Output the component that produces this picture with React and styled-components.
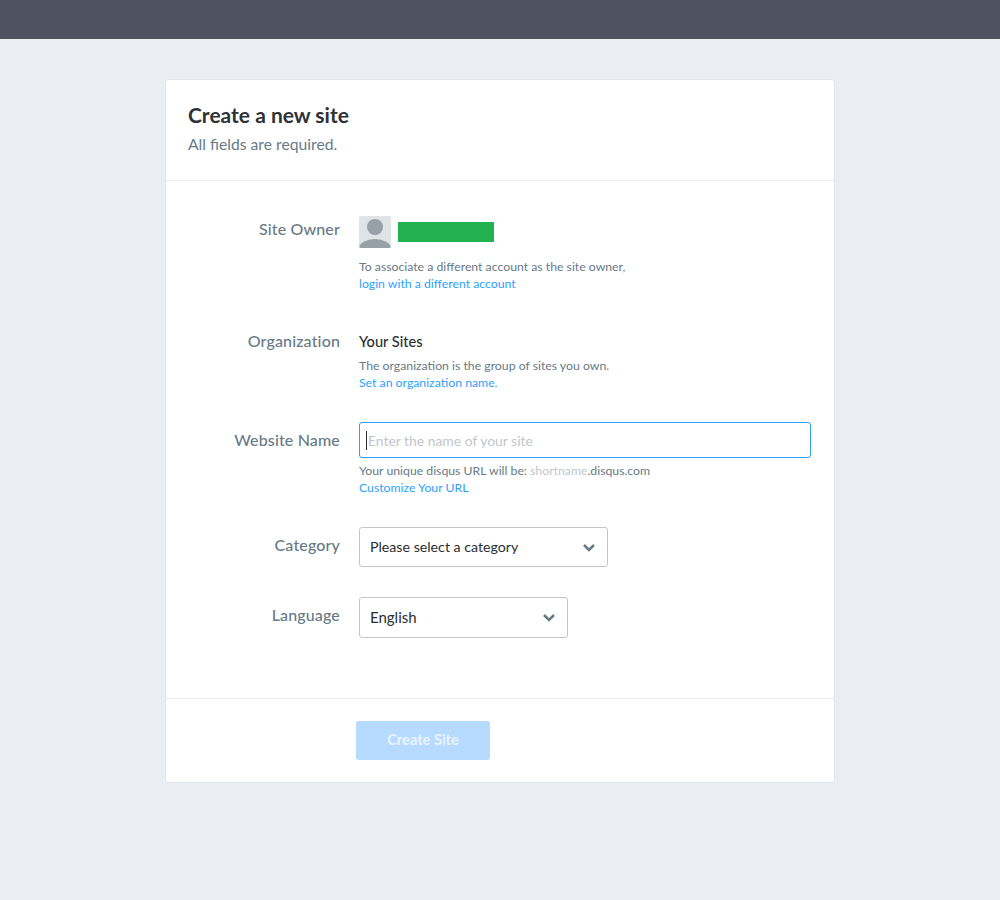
import React from "react";
import styled, { createGlobalStyle } from "styled-components";

const GlobalStyle = createGlobalStyle`
  html, body {
    margin: 0;
    padding: 0;
    background: #eaeef2;
    font-family: "Lato", "Noto Sans", sans-serif;
  }
  * { box-sizing: border-box; }
`;

const TopBar = styled.div`
  height: 39px;
  background: #4d5360;
`;

const Page = styled.div`
  min-height: 861px;
  padding-top: 40px;
`;

const Card = styled.div`
  width: 670px;
  height: 704px;
  margin: 0 auto;
  background: #fff;
  border: 1px solid #e3e6ec;
  border-radius: 3px;
  display: flex;
  flex-direction: column;
`;

const CardHeader = styled.div`
  height: 101px;
  padding: 21px 22px 0;
  border-bottom: 1px solid #e9ebf0;
`;

const Title = styled.h1`
  margin: 0;
  font-size: 21px;
  line-height: 28px;
  font-weight: 700;
  color: #2e3236;
`;

const Subtitle = styled.p`
  margin: 3px 0 0;
  font-size: 15.7px;
  line-height: 24px;
  color: #687a86;
`;

const Form = styled.div`
  flex: 1;
  padding-top: 35px;
`;

const Row = styled.div`
  display: grid;
  grid-template-columns: 174px 1fr;
  column-gap: 19px;
  margin-bottom: ${(props) => props.$gap}px;
`;

const Label = styled.div`
  text-align: right;
  font-size: 16px;
  letter-spacing: 0.15px;
  line-height: 24px;
  font-weight: 500;
  color: #687a86;
  padding-top: ${(props) => props.$top || 0}px;
`;

const OwnerLine = styled.div`
  display: flex;
  align-items: center;
  gap: 7px;
`;

const Avatar = styled.svg`
  display: block;
  width: 32px;
  height: 32px;
  border-radius: 2px;
`;

const Redacted = styled.div`
  width: 96px;
  height: 20px;
  background: #23b24f;
`;

const Hint = styled.div`
  margin-top: ${(props) => props.$top}px;
  font-size: 12.25px;
  line-height: 17px;
  color: #687a86;
`;

const Link = styled.a`
  color: #2e9fff;
  text-decoration: none;
`;

const Muted = styled.span`
  color: #c2c6cc;
`;

const OrgName = styled.div`
  padding-top: 1px;
  font-size: 14.6px;
  line-height: 24px;
  font-weight: 500;
  color: #2a2e2e;
`;

const InputWrap = styled.div`
  position: relative;
  width: 452px;
`;

const TextInput = styled.input`
  display: block;
  width: 100%;
  height: 36px;
  padding: 0 8px;
  border: 1px solid #2e9fff;
  border-radius: 3px;
  outline: none;
  font-family: inherit;
  font-size: 13.9px;
  color: #2a2e2e;
  &::placeholder {
    color: #c2c6cc;
    opacity: 1;
  }
`;

const Caret = styled.span`
  position: absolute;
  left: 7px;
  top: 9px;
  width: 1px;
  height: 19px;
  background: #2a2e2e;
`;

const SelectBox = styled.div`
  width: ${(props) => props.$width}px;
  height: ${(props) => props.$height}px;
  padding: 0 11px 0 10px;
  display: flex;
  align-items: center;
  justify-content: space-between;
  border: 1px solid #c2c6cc;
  border-radius: 3px;
  font-size: ${(props) => props.$size}px;
  color: #2a2e2e;
`;

const SelectText = styled.span`
  margin-top: -1px;
`;

const Chevron = styled.svg`
  display: block;
  width: 14px;
  height: 9px;
`;

const CardFooter = styled.div`
  height: 84px;
  padding: 22px 0 0 190px;
  border-top: 1px solid #e9ebf0;
`;

const SubmitButton = styled.button`
  display: block;
  width: 134px;
  height: 39px;
  padding: 0 0 2px;
  border: none;
  border-radius: 3px;
  background: #b6dbff;
  color: #e9f4ff;
  font-family: inherit;
  font-size: 14.6px;
  font-weight: 700;
`;

const ChevronIcon = () => (
  <Chevron viewBox="0 0 14 9">
    <path d="M2 2l5 5 5-5" fill="none" stroke="#687a86" strokeWidth="2.5" />
  </Chevron>
);

export default function App() {
  return (
    <>
      <GlobalStyle />
      <TopBar />
      <Page>
        <Card>
          <CardHeader>
            <Title>Create a new site</Title>
            <Subtitle>All fields are required.</Subtitle>
          </CardHeader>
          <Form>
            <Row $gap={37}>
              <Label $top={1}>Site Owner</Label>
              <div>
                <OwnerLine>
                  <Avatar viewBox="0 0 32 32">
                    <rect width="32" height="32" fill="#dfe4e7" />
                    <circle cx="16" cy="11" r="8" fill="#979fa7" />
                    <ellipse cx="16" cy="32" rx="16" ry="9" fill="#979fa7" />
                  </Avatar>
                  <Redacted />
                </OwnerLine>
                <Hint $top={10}>
                  To associate a different account as the site owner,
                  <br />
                  <Link>login with a different account</Link>
                </Hint>
              </div>
            </Row>
            <Row $gap={31}>
              <Label>Organization</Label>
              <div>
                <OrgName>Your Sites</OrgName>
                <Hint $top={3}>
                  The organization is the group of sites you own.
                  <br />
                  <Link>Set an organization name.</Link>
                </Hint>
              </div>
            </Row>
            <Row $gap={31}>
              <Label $top={6}>Website Name</Label>
              <div>
                <InputWrap>
                  <TextInput placeholder="Enter the name of your site" readOnly />
                  <Caret />
                </InputWrap>
                <Hint $top={4}>
                  Your unique disqus URL will be: <Muted>shortname</Muted>.disqus.com
                  <br />
                  <Link>Customize Your URL</Link>
                </Hint>
              </div>
            </Row>
            <Row $gap={30}>
              <Label $top={6}>Category</Label>
              <SelectBox $width={249} $height={40} $size={14.2}>
                <SelectText>Please select a category</SelectText>
                <ChevronIcon />
              </SelectBox>
            </Row>
            <Row $gap={0}>
              <Label $top={6}>Language</Label>
              <SelectBox $width={209} $height={41} $size={15}>
                <SelectText>English</SelectText>
                <ChevronIcon />
              </SelectBox>
            </Row>
          </Form>
          <CardFooter>
            <SubmitButton>Create Site</SubmitButton>
          </CardFooter>
        </Card>
      </Page>
    </>
  );
}
